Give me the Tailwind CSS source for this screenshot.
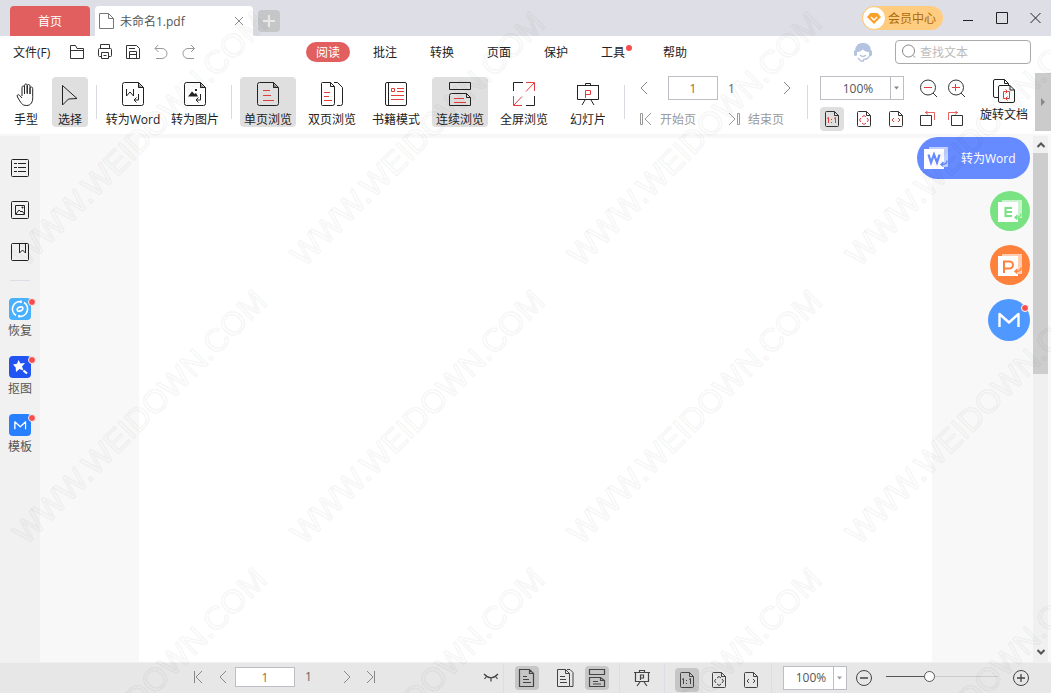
<!DOCTYPE html>
<html lang="zh-CN">
<head>
<meta charset="utf-8">
<meta name="viewport" content="width=device-width, initial-scale=1">
<title>未命名1.pdf</title>
<script src="https://cdn.jsdelivr.net/npm/@tailwindcss/browser@4"></script>
</head>
<body class="relative flex h-screen flex-col overflow-hidden bg-white font-['Open_Sans','Noto_Sans_CJK_SC',sans-serif] text-xs leading-4 text-[#222]">

<!-- Shared icons -->
<svg class="hidden" aria-hidden="true">
  <symbol id="doc" viewBox="0 0 24 26"><path d="M3.5 1.5H17.5L22.5 6.5V22.5a2 2 0 0 1-2 2H3.5a2 2 0 0 1-2-2V3.5a2 2 0 0 1 2-2zM17.5 1.5V6.5H22.5" fill="none" stroke="currentColor"/><path d="M17 2v5h5z" fill="currentColor" opacity=".5"/></symbol>
  <symbol id="sdoc" viewBox="0 0 16 18"><path d="M2.500 1.500H10.500L14.500 5.500V15.500a1 1 0 0 1-1 1H2.500a1 1 0 0 1-1-1V2.500a1 1 0 0 1 1-1zM10.500 1.500V5.500H14.500" fill="none" stroke="currentColor"/></symbol>
  <symbol id="left" viewBox="0 0 8 14"><path d="M7 1L1 7l6 6" fill="none" stroke="currentColor"/></symbol>
  <symbol id="right" viewBox="0 0 8 14"><path d="M1 1l6 6-6 6" fill="none" stroke="currentColor"/></symbol>
  <symbol id="first" viewBox="0 0 12 14"><path d="M2.500 1v12M10 1L4 7l6 6" fill="none" stroke="currentColor"/></symbol>
  <symbol id="last" viewBox="0 0 12 14"><path d="M9.500 1v12M2 1l6 6-6 6" fill="none" stroke="currentColor"/></symbol>
  <symbol id="first2" viewBox="0 0 12 14"><path d="M.5 1.500h2v11h-2zM11 1L5 7l6 6" fill="none" stroke="currentColor"/></symbol>
  <symbol id="last2" viewBox="0 0 12 14"><path d="M9.500 1.500h2v11h-2zM1 1l6 6-6 6" fill="none" stroke="currentColor"/></symbol>
  <symbol id="m" viewBox="0 0 22 16"><path d="M1.500 15V2L11 10.500 20.500 2V15" fill="none" stroke="currentColor" stroke-width="2.400" stroke-linejoin="round"/></symbol>
</svg>

<header class="flex h-9 shrink-0 items-end bg-[#dedfe6] pl-2.5">
  <button class="h-[30px] w-20 rounded-t-sm bg-[#e25f5f] pt-0.5 text-white">首页</button>
  <div class="ml-[5px] flex h-[30px] w-[158px] items-center rounded-t bg-white pr-2 pl-1 text-[#555]">
    <svg class="h-[18px] w-4 shrink-0" fill="none" stroke="#777" viewBox="0 0 16 18"><path d="M.5 1.500h9l5 5v10H.5zM9.500 1.500v5h5"/></svg>
    <span class="ml-[5px] grow pt-0.5">未命名1.pdf</span>
    <button aria-label="关闭标签"><svg class="size-3" stroke="#888" viewBox="0 0 12 12"><path d="M2 2l8 8M10 2l-8 8"/></svg></button>
  </div>
  <button aria-label="新建标签" class="mb-1 ml-[5px] flex size-[22px] items-center justify-center rounded bg-[#c5c6c8]"><svg class="size-3" stroke="#e8e8e8" stroke-width="2" viewBox="0 0 12 12"><path d="M0 6h12M6 0v12"/></svg></button>
  <button class="mb-1.5 ml-auto flex h-6 w-[81px] items-center rounded-full bg-[#ffcc80] text-[#ad6a08]">
    <svg class="size-6 shrink-0" viewBox="0 0 24 24"><circle cx="12" cy="12" r="11.500" fill="#fff" stroke="#ffc470"/><path d="M8.500 7h7l3.500 4-7 7-7-7z" fill="#f9a02b"/><path d="M9 11l3 3 3-3" fill="none" stroke="#fff" stroke-width="1.300"/></svg>
    <span class="ml-0.5 pt-0.5 whitespace-nowrap">会员中心</span>
  </button>
  <div class="mb-2.5 ml-[17px] mr-[7px] flex items-center gap-[18px]">
    <button aria-label="最小化"><svg class="h-4 w-4" stroke="#222" viewBox="0 0 16 16"><path d="M3 10.500h10"/></svg></button>
    <button aria-label="最大化"><svg class="h-4 w-4" fill="none" stroke="#222" viewBox="0 0 16 16"><path d="M2.500 2.500h11v11h-11z"/></svg></button>
    <button aria-label="关闭"><svg class="h-4 w-4" stroke="#222" viewBox="0 0 16 16"><path d="M2.500 3l10 10M12.500 3l-10 10"/></svg></button>
  </div>
</header>

<nav class="flex h-8 shrink-0 items-center pr-5 pl-[13px]">
  <button class="w-[50px] pt-0.5 text-left">文件(F)</button>
  <div class="flex text-[#333]">
    <button aria-label="打开" class="flex w-7 justify-center"><svg class="size-4" fill="none" stroke="currentColor" viewBox="0 0 16 16"><path d="M1.500 14.500V1.500h5l1.500 3h6.500v10zM1.500 6.500h13"/></svg></button>
    <button aria-label="打印" class="flex w-7 justify-center"><svg class="size-4" fill="none" stroke="currentColor" viewBox="0 0 16 16"><path d="M3.500 4.500v-4h9v4M4.500 12.500h-2a1 1 0 0 1-1-1v-6a1 1 0 0 1 1-1h11a1 1 0 0 1 1 1v6a1 1 0 0 1-1 1h-2M4.500 8.500h7v6h-7zM6.500 11.500h3"/></svg></button>
    <button aria-label="保存" class="flex w-7 justify-center"><svg class="size-4" fill="none" stroke="currentColor" viewBox="0 0 16 16"><path d="M1.500 1.500h10l3 3v10h-13zM4.500 14.500v-7h7v7M4.500 10.500h7M4 4.500h6"/></svg></button>
    <button aria-label="撤销" class="flex w-7 justify-center text-[#999]"><svg class="size-4" fill="none" stroke="currentColor" viewBox="0 0 16 16"><path d="M5 1L2 4.500 5.500 8M2 4.500h7a4.500 4.500 0 0 1 0 10H3"/></svg></button>
    <button aria-label="重做" class="flex w-7 justify-center text-[#999]"><svg class="size-4" fill="none" stroke="currentColor" viewBox="0 0 16 16"><path d="M10 1l3.500 3.500L10 8M13.500 4.500H7a4.500 4.500 0 0 0 0 10h6"/></svg></button>
  </div>
  <div class="ml-[103px] flex gap-[13px]">
    <button class="h-5 w-11 rounded-full bg-[#e25f5f] pt-0.5 text-white">阅读</button>
    <button class="w-11 pt-0.5">批注</button>
    <button class="w-11 pt-0.5">转换</button>
    <button class="w-11 pt-0.5">页面</button>
    <button class="w-11 pt-0.5">保护</button>
    <button class="relative w-11 pt-0.5">工具<span class="absolute top-[3px] right-[3px] size-1.5 rounded-full bg-[#f94d4d]"></span></button>
    <button class="ml-[5px] w-11 pt-0.5">帮助</button>
  </div>
  <button aria-label="客服" class="ml-auto"><svg class="size-5" viewBox="0 0 20 20"><path d="M3 10C2 4 5 1.500 10 1.500S18 4 17 10" fill="#b3c3e0" stroke="#b3c3e0"/><circle cx="10" cy="11" r="6" fill="#fff"/><path d="M4 11c0-4 2-5 4-5 1 2 5 3 8 3v2c0-4-2-7-6-7S4 7 4 11z" fill="#b3c3e0"/><path d="M4 10c3 0 5-1.500 6-3 1 2 3 3 6 3V7l-3-3.500H7L4 7z" fill="#b3c3e0"/><rect x="1" y="8" width="3" height="6" rx="1.500" fill="#b3c3e0"/><rect x="16" y="8" width="3" height="6" rx="1.500" fill="#b3c3e0"/><path d="M17 13c-1 3-3 4.500-7 4.500M7 13q3 3 6 0M5 16l3 3h3" fill="none" stroke="#b3c3e0" stroke-width="1.300"/></svg></button>
  <label class="ml-[22px] flex h-6 w-[136px] items-center gap-[3px] rounded-sm border border-[#aaa] pl-[5px]">
    <svg class="size-4 shrink-0" fill="none" stroke="#888" viewBox="0 0 16 16"><circle cx="7.500" cy="7" r="6"/><path d="M12 11.500l2 2"/></svg>
    <input type="text" aria-label="查找文本" placeholder="查找文本" class="w-full min-w-0 pt-0.5 outline-none placeholder:text-[#bbb]">
  </label>
</nav>

<section aria-label="工具栏" class="flex h-[68px] shrink-0 items-start overflow-hidden border-b-2 border-[#f7f7f7] pt-2 whitespace-nowrap">
  <div class="mt-px ml-2 flex gap-2">
    <button class="flex h-[50px] w-9 flex-col items-center gap-[5px] pt-1"><svg class="h-[26px] w-6 shrink-0" fill="none" stroke="#222" viewBox="0 0 24 26"><path d="M8 15V6.500c0-2 2.500-2 2.500 0V13M10.500 12V4.500c0-2 2.700-2 2.700 0V13M13.200 12V5c0-2 2.800-2 2.800 0v8M16 13V7.500c0-2 2.700-2 2.700 0v8C19 21 17 24.500 12.500 24.500 8 24.500 7 22 3.500 16c-1.200-2 .8-3 2-1.700L8 17"/></svg>手型</button>
    <button class="flex h-[50px] w-9 flex-col items-center gap-[5px] rounded bg-[#dfdfdf] pt-1"><svg class="h-[26px] w-6 shrink-0" fill="none" stroke="#222" viewBox="0 0 24 26"><path d="M4.500 4.500L19 17.500l-8.500.5-6 6z"/></svg>选择</button>
  </div>
  <div class="mt-[9px] ml-2 h-[34px] w-px bg-[#d8dbe0]"></div>
  <div class="mt-px ml-2 flex gap-1.5">
    <button class="flex h-[50px] w-14 flex-col items-center gap-[5px] pt-1"><svg class="h-[26px] w-6 shrink-0 text-[#222]" viewBox="0 0 24 26"><use href="#doc"/><path d="M5.500 8v7l3.500-4 3.500 4V8M17.500 13v6h-4M15.500 16.500l-2.500 2.500 2.500 2.500" fill="none" stroke="currentColor"/></svg>转为Word</button>
    <button class="flex h-[50px] w-14 flex-col items-center gap-[5px] pt-1"><svg class="h-[26px] w-6 shrink-0 text-[#222]" viewBox="0 0 24 26"><use href="#doc"/><path d="M5 15.500l4-5 2.500 2.500 1.500-1 2 3.500zM12 8h2v2h-2z" fill="currentColor"/><path d="M17.500 13v6h-4M15.500 16.500l-2.500 2.500 2.500 2.500" fill="none" stroke="currentColor"/></svg>转为图片</button>
  </div>
  <div class="mt-[9px] ml-2 h-[34px] w-px bg-[#d8dbe0]"></div>
  <div class="mt-px ml-2 flex gap-2">
    <button class="flex h-[50px] w-14 flex-col items-center gap-[5px] rounded bg-[#dfdfdf] pt-1"><svg class="h-[26px] w-6 shrink-0 text-[#222]" viewBox="0 0 24 26"><use href="#doc"/><path d="M7 9.500h7M7 14.500h8M7 19.500h11" stroke="#e23c3c"/></svg>单页浏览</button>
    <button class="flex h-[50px] w-14 flex-col items-center gap-[5px] pt-1"><svg class="h-[26px] w-6 shrink-0" fill="none" stroke="#222" viewBox="0 0 24 26"><path d="M2.500 1.500h8l4 4v17a2 2 0 0 1-2 2h-10a1 1 0 0 1-1-1v-21a1 1 0 0 1 1-1zM10.500 1.500v4h4M14 1.500h3.500l5 5v16a2 2 0 0 1-2 2H17"/><path d="M4 11.500h6M4 15.500h5M4 19.500h8" stroke="#e23c3c"/></svg>双页浏览</button>
    <button class="flex h-[50px] w-14 flex-col items-center gap-[5px] pt-1"><svg class="h-[26px] w-6 shrink-0" fill="none" stroke="#222" viewBox="0 0 24 26"><path d="M3 1.500h18a1.500 1.500 0 0 1 1.500 1.500v20a1.500 1.500 0 0 1-1.500 1.500H3A1.500 1.500 0 0 1 1.500 23V3A1.500 1.500 0 0 1 3 1.500zM4.500 1.500v23"/><path d="M7.500 7.500h3v3h-3zM13 7.500h7M13 10.500h7M7 14.500h13M7 18.500h13" stroke="#e23c3c"/></svg>书籍模式</button>
    <button class="flex h-[50px] w-14 flex-col items-center gap-[5px] rounded bg-[#dfdfdf] pt-1"><svg class="h-[26px] w-6 shrink-0" fill="none" stroke="#222" viewBox="0 0 24 26"><path d="M1.500 1.500h21v7h-21zM3.500 12.500h15l4 4v8h-21v-10a2 2 0 0 1 2-2zM18.500 12.500v4h4"/><path d="M6 17.500h10M6 21.500h12" stroke="#e23c3c"/></svg>连续浏览</button>
    <button class="flex h-[50px] w-14 flex-col items-center gap-[5px] pt-1"><svg class="h-[26px] w-6 shrink-0" fill="none" stroke="#222" viewBox="0 0 24 26"><path d="M1.500 10V1.500H11M22.500 15v9.500H14"/><path d="M14 1.500h8.500V10M22 2l-8 8.500M1.500 15v9.500H10M2 24l8-8.500" stroke="#e23c3c"/></svg>全屏浏览</button>
    <button class="flex h-[50px] w-14 flex-col items-center gap-[5px] pt-1"><svg class="h-[26px] w-6 shrink-0" fill="none" stroke="#222" viewBox="0 0 24 26"><path d="M1 4.500h22M9.500 4.500V2.500h5V4.500M1.500 4.500v14h21v-14M9 19l-3 5M15 19l3 5"/><path d="M9.500 17V9.500h5v4h-5" stroke="#e23c3c"/></svg>幻灯片</button>
  </div>
  <div class="mt-[9px] ml-2 h-[34px] w-px bg-[#d8dbe0]"></div>
  <div class="ml-[15px] flex w-[151px] flex-col gap-[7px] text-[#888]">
    <div class="flex h-6 items-center">
      <button aria-label="上一页"><svg class="h-3.5 w-2"><use href="#left"/></svg></button>
      <input type="text" aria-label="页码" value="1" class="ml-5 h-6 w-[50px] border border-[#bbbec2] pt-px text-center text-[#a5682a] outline-none">
      <span class="ml-2.5 pt-px text-[#666]">1</span>
      <button aria-label="下一页" class="ml-auto"><svg class="h-3.5 w-2"><use href="#right"/></svg></button>
    </div>
    <div class="flex h-6 items-center text-[#999]">
      <button class="flex items-center gap-2"><svg class="h-3.5 w-3"><use href="#first2"/></svg><span class="pt-0.5">开始页</span></button>
      <button class="ml-8 flex items-center gap-2"><svg class="h-3.5 w-3"><use href="#last2"/></svg><span class="pt-0.5">结束页</span></button>
    </div>
  </div>
  <div class="mt-[9px] ml-4 h-[34px] w-px bg-[#d8dbe0]"></div>
  <div class="ml-3 flex flex-col gap-[7px] text-[#333]">
    <div class="flex h-6 items-center">
      <div class="relative h-6 w-[84px]">
        <select aria-label="缩放" class="size-full appearance-none border border-[#bbbec2] pt-px pr-2 text-center text-[#555]"><option>100%</option></select>
        <svg class="pointer-events-none absolute top-0 right-0 h-6 w-3.5" viewBox="0 0 14 24"><path d="M.5 0v24" stroke="#bbbec2"/><path d="M4 10.500h5l-2.500 3z" fill="#888"/></svg>
      </div>
      <button aria-label="缩小" class="ml-4"><svg class="size-[18px]" fill="none" stroke="#333" viewBox="0 0 18 18"><circle cx="8" cy="8.500" r="7.500"/><path d="M13 14l4 4"/><path d="M4 8.500h8" stroke="#e23c3c"/></svg></button>
      <button aria-label="放大" class="ml-2.5"><svg class="size-[18px]" fill="none" stroke="#333" viewBox="0 0 18 18"><circle cx="8" cy="8.500" r="7.500"/><path d="M13 14l4 4"/><path d="M4 8.500h8M7.500 5v7" stroke="#e23c3c"/></svg></button>
    </div>
    <div class="flex h-6 items-center">
      <button aria-label="实际大小" class="flex size-6 items-center justify-center rounded bg-[#dfdfdf]"><svg class="h-[18px] w-4" viewBox="0 0 16 18"><use href="#sdoc"/><path d="M3 8.500l1.500-1V13M10 8.500l1.500-1V13M7.500 9v1M7.500 12v1" fill="none" stroke="#e23c3c"/></svg></button>
      <button aria-label="适合页面" class="ml-2 flex size-6 items-center justify-center"><svg class="h-[18px] w-4" viewBox="0 0 16 18"><use href="#sdoc"/><path d="M6 7l2-1.500L10 7M6 13l2 1.500 2-1.500M5 8l-1.500 2L5 12M11 8l1.500 2-1.500 2" fill="none" stroke="#e23c3c"/></svg></button>
      <button aria-label="适合宽度" class="ml-2 flex size-6 items-center justify-center"><svg class="h-[18px] w-4" viewBox="0 0 16 18"><use href="#sdoc"/><path d="M6 8l-2 2 2 2M10 8l2 2-2 2" fill="none" stroke="#e23c3c"/></svg></button>
      <button aria-label="向左旋转" class="ml-3"><svg class="size-4" fill="none" stroke="#333" viewBox="0 0 16 16"><path d="M.5 4.500h11v10H.5z"/><path d="M8 -.5L5.500 1.500 8 3.500M5.500 1.500h9V9" stroke="#e23c3c" opacity=".8"/></svg></button>
      <button aria-label="向右旋转" class="ml-3"><svg class="size-4" fill="none" stroke="#333" viewBox="0 0 16 16"><path d="M3.500 4.500h11v10h-11z"/><path d="M7 -.5l2.500 2L7 3.500M9.500 1.500h-9V9" stroke="#e23c3c" opacity=".8"/></svg></button>
    </div>
  </div>
  <button class="mt-px ml-[14px] flex h-[50px] flex-col items-center gap-[3px] pt-px"><svg class="h-[26px] w-6 shrink-0" fill="none" stroke="#222" viewBox="0 0 24 26"><path d="M6 19.500H3a1.500 1.500 0 0 1-1.500-1.500V3A1.500 1.500 0 0 1 3 1.500h9.500l4 4V7M12.500 1.500v4h4"/><path d="M8 7.500h10l4.500 4.500v11a1.500 1.500 0 0 1-1.500 1.500H8A1.500 1.500 0 0 1 6.500 23V9A1.500 1.500 0 0 1 8 7.500zM18 7.500v4.500h4.500"/><path d="M13 20.500h-1.500v-7H15M13.500 11.500l2 2-2 2M16 13.500h1.500v7H14M15.500 18.500l-2 2 2 2" stroke="#e23c3c"/></svg>旋转文档</button>
  <button aria-label="更多工具" class="mt-[-3px] ml-auto flex h-[58px] w-4 items-center justify-center bg-[#cbcbcb]"><svg class="h-2 w-1" viewBox="0 0 4 8"><path d="M0 0l4 4-4 4z" fill="#888"/></svg></button>
</section>

<main class="flex min-h-0 grow bg-[#f8f8f8]">
  <aside class="flex w-10 shrink-0 flex-col items-center bg-[#f1f1f1] pt-[22px] text-[#555]">
    <div class="flex flex-col gap-[22px]">
      <button aria-label="目录"><svg class="block size-5" fill="none" stroke="#222" viewBox="0 0 20 20"><rect x="1.500" y="1.500" width="17" height="17" rx="1"/><path d="M4 5.500h3M8 5.500h8M4 9.500h3M8 9.500h8M4 13.500h3M8 13.500h8"/></svg></button>
      <button aria-label="缩略图"><svg class="block size-5" fill="none" stroke="#222" viewBox="0 0 20 20"><rect x="1.500" y="1.500" width="17" height="17" rx="1"/><path d="M5.500 5.500h9v9h-9zM6 14l3-4 2 2 1-1 2.500 3"/><path d="M12 7h1v1h-1z"/></svg></button>
      <button aria-label="书签"><svg class="block size-5" fill="none" stroke="#222" viewBox="0 0 20 20"><rect x="1.500" y="1.500" width="17" height="17" rx="1"/><path d="M9.500 1.500V11l3-3 3 3V1.500"/></svg></button>
    </div>
    <hr class="mt-[18px] w-5 border-[#dddfe8]">
    <div class="mt-[17px] flex flex-col gap-[17px]">
      <button class="relative flex flex-col items-center gap-[3px]"><svg class="size-[22px]" viewBox="0 0 22 22" fill="none" stroke="#fff" stroke-width="1.700"><rect width="22" height="22" rx="4" fill="#48b0ff" stroke="none"/><path d="M7 17.500A7.500 7.500 0 0 1 12 3.700M15 4.500a7.500 7.500 0 0 1-5 13.800M12 2.500v2.500M10 17v2.500M8 12.500c0-3 2-4 6-3.500M14 9.500c0 3-2 4-6 3.500"/></svg>恢复<span class="absolute top-0 -right-1 size-2 rounded-full border border-[#f1f1f1] bg-[#f94d4d]"></span></button>
      <button class="relative flex flex-col items-center gap-[3px]"><svg class="size-[22px]" viewBox="0 0 22 22"><rect width="22" height="22" rx="4" fill="#2254f4"/><path d="M9.500 4l2 3.500 4.500-.5-3 3.500 1.500 4-4-1.500-3.500 3-.3-4.500L4 8.500l4-.8z" fill="#fff"/><path d="M14.500 14.500l3.500 3" stroke="#fff" stroke-width="2.200"/></svg>抠图<span class="absolute top-0 -right-1 size-2 rounded-full border border-[#f1f1f1] bg-[#f94d4d]"></span></button>
      <button class="relative flex flex-col items-center gap-[3px]"><svg class="size-[22px] text-white" viewBox="0 0 22 22"><rect width="22" height="22" rx="4" fill="#2680ff"/><use href="#m" x="5" y="6.500" width="12.500" height="9.500"/></svg>模板<span class="absolute top-0 -right-1 size-2 rounded-full border border-[#f1f1f1] bg-[#f94d4d]"></span></button>
    </div>
  </aside>

  <div class="relative min-w-0 grow pt-0.5 pr-[101px] pl-[99px]">
    <div class="h-full bg-white"></div>
    <div class="absolute top-px right-[3px] flex flex-col items-end">
      <button class="flex h-[42px] w-[113px] items-center rounded-full bg-[#668aff] pl-[7px] text-white"><svg class="h-[22px] w-6" viewBox="0 0 24 22"><path d="M5 0h19v20H5z" fill="#fff" opacity=".6"/><path d="M0 2h20v20H0z" fill="#fff"/><path d="M4.500 7.500l2.500 8 3-8 3 8 2.500-8" fill="none" stroke="#668aff" stroke-width="2.200"/><path d="M23 13.500c0 3-2 4-5.500 4M19.500 15l-2.500 2.500 2.500 2" fill="none" stroke="#668aff" stroke-width="1.400"/></svg><span class="ml-[13px] pt-0.5">转为Word</span></button>
      <button aria-label="转为Excel" class="mt-3 flex size-10 items-center justify-center rounded-full bg-[#79e384]"><svg class="h-[22px] w-6" viewBox="0 0 24 22"><path d="M4 0h20v18H4z" fill="#fff" opacity=".6"/><path d="M0 2h20v20H0z" fill="#fff"/><path d="M14 8H7.500v8H14M7 12h7" fill="none" stroke="#79e384" stroke-width="2"/><path d="M23 13.500c0 3-2 4-5.500 4M19.500 15l-2.500 2.500 2.500 2" fill="none" stroke="#79e384" stroke-width="1.400"/></svg></button>
      <button aria-label="转为PPT" class="mt-3.5 flex size-10 items-center justify-center rounded-full bg-[#ff823c]"><svg class="h-[22px] w-6" viewBox="0 0 24 22"><path d="M4 0h20v20H4z" fill="#fff" opacity=".6"/><path d="M0 2h20v20H0z" fill="#fff"/><path d="M6 19V7.500h5.500a3 3 0 0 1 0 7H6" fill="none" stroke="#ff823c" stroke-width="2"/><path d="M23 13.500c0 3-2 4-5.500 4M19.500 15l-2.500 2.500 2.500 2" fill="none" stroke="#ff823c" stroke-width="1.400"/></svg></button>
      <button aria-label="模板" class="relative mt-3.5 flex size-[42px] items-center justify-center rounded-full bg-[#4f98ff] text-white"><svg class="h-4 w-[22px]"><use href="#m"/></svg><span class="absolute top-[5px] right-px size-2 rounded-full border border-white bg-[#f94d4d]"></span></button>
    </div>
  </div>

  <div class="mr-[3px] flex w-[15px] shrink-0 flex-col items-center bg-[#f0f0f0] text-[#555]">
    <button aria-label="向上滚动" class="flex h-[17px] shrink-0 items-center"><svg class="h-1.5 w-2" fill="none" stroke="currentColor" stroke-width="2" viewBox="0 0 8 6"><path d="M0.500 5l3.500-3.500L7.500 5"/></svg></button>
    <div class="h-[42%] w-full bg-[#cdcdcd]"></div>
    <button aria-label="向下滚动" class="mt-auto flex h-[19px] shrink-0 items-center pb-0.5"><svg class="h-1.5 w-2" fill="none" stroke="currentColor" stroke-width="2" viewBox="0 0 8 6"><path d="M0.500 1l3.500 3.500L7.500 1"/></svg></button>
  </div>
</main>

<footer class="flex h-[31px] shrink-0 items-center border-t border-[#f0f0f0] bg-[#e7e7e7] pl-48 text-[#888]">
  <div class="flex items-center pb-[3px]">
    <button aria-label="首页"><svg class="h-3.5 w-3"><use href="#first"/></svg></button>
    <button aria-label="上一页" class="ml-[15px]"><svg class="h-3.5 w-2"><use href="#left"/></svg></button>
    <input type="text" aria-label="当前页" value="1" class="ml-2 h-5 w-[60px] border border-[#bbbec2] bg-white pt-px text-center text-[#a5682a] outline-none">
    <span class="ml-2.5 w-[38px] pt-px text-[#666]">1</span>
    <button aria-label="下一页"><svg class="h-3.5 w-2"><use href="#right"/></svg></button>
    <button aria-label="末页" class="ml-3.5"><svg class="h-3.5 w-3"><use href="#last"/></svg></button>
  </div>
  <div class="ml-[106px] flex h-full items-center text-[#444]">
    <button aria-label="护眼模式"><svg class="h-2.5 w-4" fill="none" stroke="currentColor" stroke-width="1.200" viewBox="0 0 16 10"><path d="M1 1q7 7.500 14 0M3.500 3.500L1.500 6M8 5V8.500M12.500 3.500l2 2.500"/></svg></button>
    <div class="ml-1 h-full w-px bg-[#dcdde6]"></div>
    <button aria-label="单页" class="ml-[11px] flex size-6 items-center justify-center rounded bg-[#c6c6c6]"><svg class="size-5" viewBox="0 0 20 20"><path d="M2.500 1.500h10l4 4v13h-14zM12.500 1.500v4h4M6 8.500h4M6 11.500h6M6 14.500h8" fill="none" stroke="currentColor" stroke-width="1.200"/></svg></button>
    <button aria-label="双页" class="ml-3.5 flex size-6 items-center justify-center"><svg class="size-5" viewBox="0 0 20 20" fill="none" stroke="currentColor"><path d="M2.500 1.500h8l4 4v13h-12zM10.500 1.500v4h4M12 1.500h3l3 3v14h-3M5 8.500h5M5 11.500h6M5 14.500h7"/></svg></button>
    <button aria-label="连续" class="ml-2 flex size-6 items-center justify-center rounded bg-[#c6c6c6]"><svg class="size-5" viewBox="0 0 20 20" fill="none" stroke="currentColor" stroke-width="1.200"><path d="M2.500 1.500h15v5h-15zM2.500 9.500h11l4 3v6h-15zM13.500 9.500v3h4M6 13.500h5M6 16h8"/></svg></button>
    <div class="ml-2.5 h-full w-px bg-[#dcdde6]"></div>
    <button aria-label="放映" class="ml-3.5"><svg class="h-[18px] w-4" viewBox="0 0 16 18" fill="none" stroke="currentColor" stroke-width="1.200"><path d="M0 3.500h16M5.500 3V1.500h5V3M1.500 3.500v9h13v-9M6 13l-3 4M10 13l3 4M6.500 11V6h3v3h-3"/></svg></button>
    <div class="ml-3.5 h-full w-px bg-[#dcdde6]"></div>
    <div class="mt-1 ml-2.5 flex gap-2">
      <button aria-label="实际大小" class="flex size-6 items-center justify-center rounded bg-[#c6c6c6]"><svg class="h-[18px] w-4" viewBox="0 0 16 18"><use href="#sdoc"/><path d="M3 8.500l1.500-1V13M10 8.500l1.500-1V13M7.500 9v1M7.500 12v1" fill="none" stroke="currentColor"/></svg></button>
      <button aria-label="适合页面" class="flex size-6 items-center justify-center"><svg class="h-[18px] w-4" viewBox="0 0 16 18"><use href="#sdoc"/><path d="M6 7l2-1.500L10 7M6 13l2 1.500 2-1.500M5 8l-1.500 2L5 12M11 8l1.500 2-1.500 2" fill="none" stroke="currentColor"/></svg></button>
      <button aria-label="适合宽度" class="flex size-6 items-center justify-center"><svg class="h-[18px] w-4" viewBox="0 0 16 18"><use href="#sdoc"/><path d="M6 8l-2 2 2 2M10 8l2 2-2 2" fill="none" stroke="currentColor"/></svg></button>
    </div>
    <div class="ml-2 h-full w-px bg-[#dcdde6]"></div>
  </div>
  <div class="mr-[21px] ml-auto flex items-center">
    <div class="relative mb-px h-6 w-16">
      <select aria-label="页面缩放" class="size-full appearance-none border border-[#bbbec2] bg-white pt-px pr-2 text-center text-[#555]"><option>100%</option></select>
      <svg class="pointer-events-none absolute top-0 right-0 h-6 w-3.5" viewBox="0 0 14 24"><path d="M.5 0v24" stroke="#bbbec2"/><path d="M4 10.500h5l-2.500 3z" fill="#999"/></svg>
    </div>
    <button aria-label="缩小页面" class="ml-2"><svg class="size-[18px]" fill="none" stroke="#444" viewBox="0 0 18 18"><circle cx="9" cy="9" r="7.500"/><path d="M5 9h8" stroke-width="1.500"/></svg></button>
    <input type="range" aria-label="缩放滑块" min="0" max="100" value="38" class="mb-[3px] ml-[13px] h-3 w-28 appearance-none bg-transparent [&::-webkit-slider-runnable-track]:h-px [&::-webkit-slider-runnable-track]:bg-linear-to-r [&::-webkit-slider-runnable-track]:from-[#555] [&::-webkit-slider-runnable-track]:from-40% [&::-webkit-slider-runnable-track]:to-[#ccc] [&::-webkit-slider-runnable-track]:to-40% [&::-webkit-slider-thumb]:mt-[-5px] [&::-webkit-slider-thumb]:size-[11px] [&::-webkit-slider-thumb]:appearance-none [&::-webkit-slider-thumb]:rounded-full [&::-webkit-slider-thumb]:border [&::-webkit-slider-thumb]:border-[#555] [&::-webkit-slider-thumb]:bg-white">
    <button aria-label="放大页面" class="ml-3.5"><svg class="size-[18px]" fill="none" stroke="#444" viewBox="0 0 18 18"><circle cx="9" cy="9" r="7.500"/><path d="M5 9h8M9 5v8" stroke-width="1.300"/></svg></button>
  </div>
</footer>

<!-- Repeating diagonal watermark -->
<svg class="pointer-events-none absolute inset-0 size-full" aria-hidden="true">
  <defs><text id="wm" transform="rotate(-45)" font-family="Liberation Sans" font-size="32" fill="none" stroke="#000" stroke-opacity=".045" stroke-width="2" stroke-linejoin="round">WWW.WEIDOWN.COM</text></defs>
  <g><use href="#wm" x="26" y="546"/><use href="#wm" x="304" y="546"/><use href="#wm" x="581" y="546"/><use href="#wm" x="859" y="546"/></g>
  <g><use href="#wm" x="26" y="268"/><use href="#wm" x="304" y="268"/><use href="#wm" x="581" y="268"/><use href="#wm" x="859" y="268"/></g>
  <g><use href="#wm" x="26" y="824"/><use href="#wm" x="304" y="824"/><use href="#wm" x="581" y="824"/><use href="#wm" x="859" y="824"/></g>
</svg>
</body>
</html>
